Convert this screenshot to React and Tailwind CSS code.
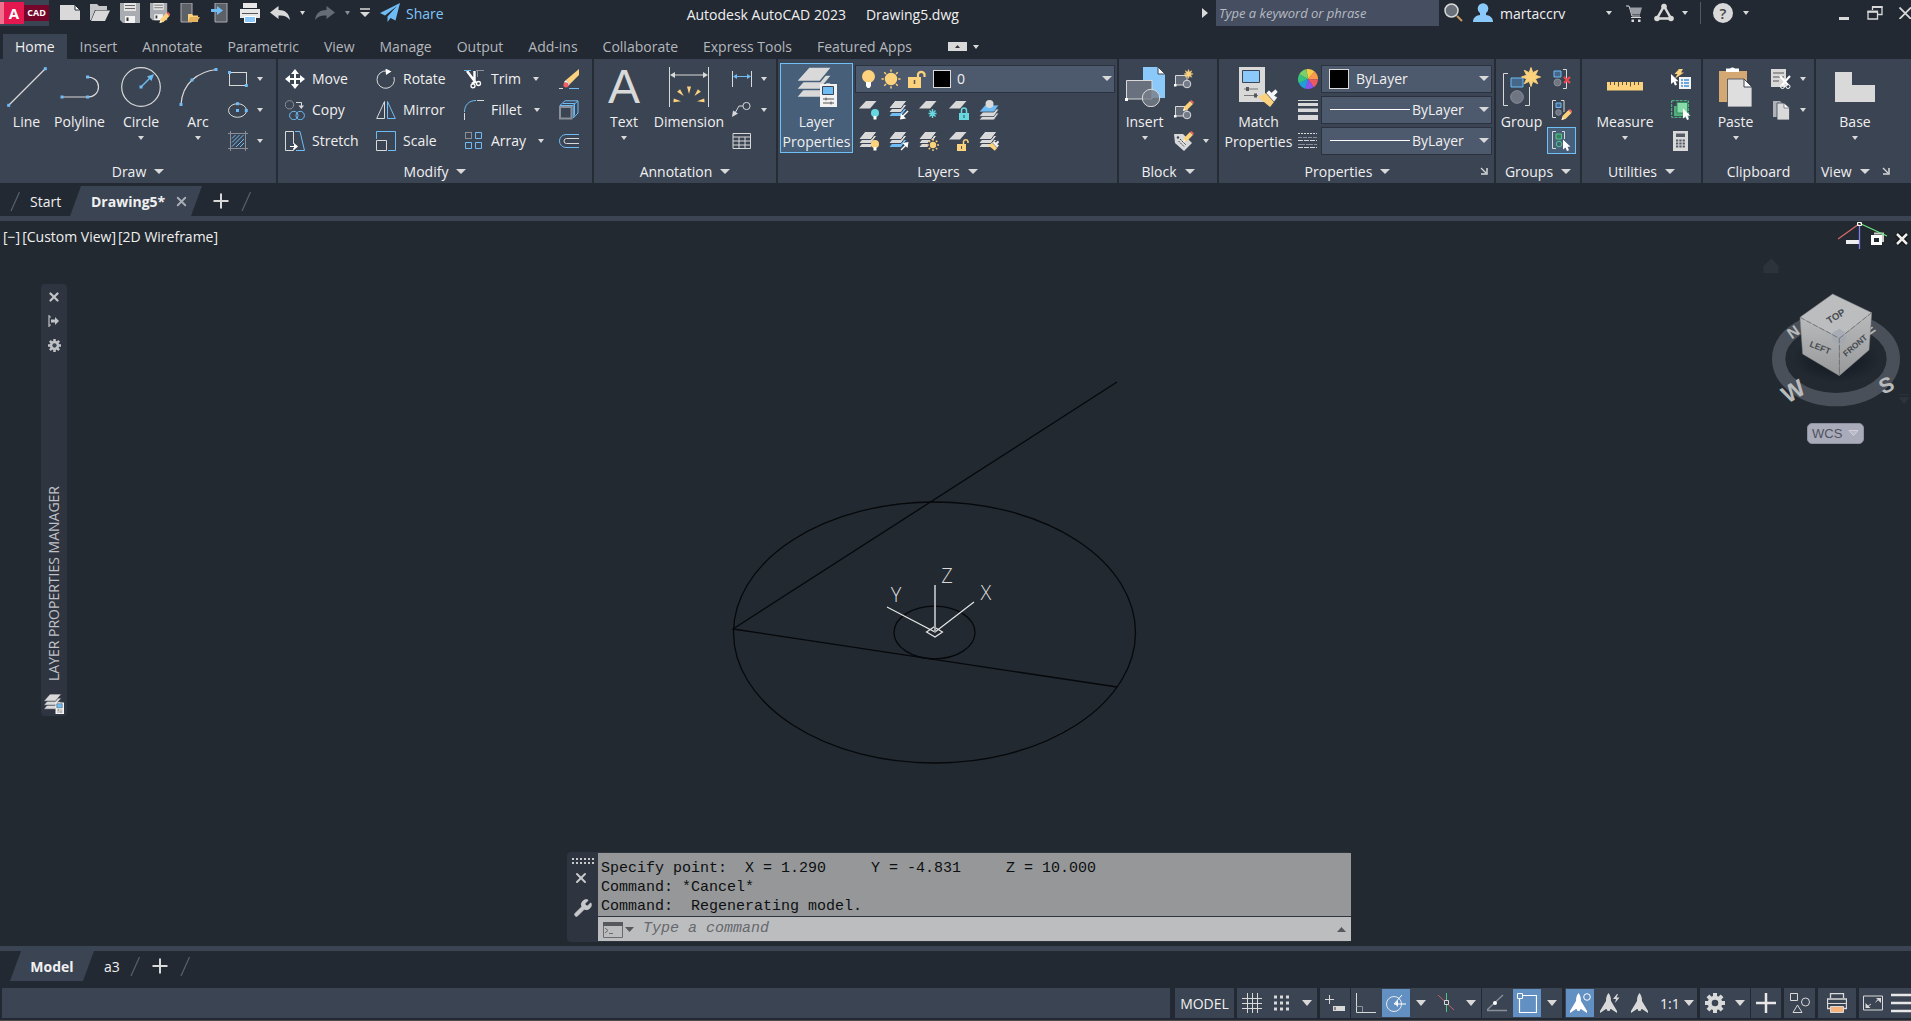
import React from 'react';
import { Wrench, X } from 'lucide-react';

const W = '#d9d9d9';
const B = '#6fbcf5';
const Y = '#fdd27c';
const R = '#f0605f';
const G = '#8a8f99';

const Svg = ({ w = 20, h = w, box, children, className = '' }) => (
  <svg width={w} height={h} viewBox={box || `0 0 ${w} ${h}`} fill="none" className={`shrink-0 ${className}`} aria-hidden="true">
    {children}
  </svg>
);

const Caret = ({ w = 6, h = 4, color = W, className = '' }) => (
  <Svg w={w} h={h} className={className}>
    <path d={`M0 0H${w}L${w / 2} ${h}Z`} fill={color} />
  </Svg>
);

const Dot = ({ x, y, s = 3 }) => <rect x={x - s / 2} y={y - s / 2} width={s} height={s} fill={B} />;

/* ---------- shared icon parts ---------- */

const Pencil = ({ x = 0, y = 0 }) => (
  <g transform={`translate(${x} ${y})`}>
    <path d="M1 7L7 1L10 4L4 10L0 11Z" fill={Y} />
    <path d="M7 1L8.5 0L11 2.5L10 4Z" fill={R} />
    <path d="M0 11L1 8.5L2.5 10Z" fill="#fff" />
  </g>
);

const Bulb = ({ x = 0, y = 0, color = Y }) => (
  <g transform={`translate(${x} ${y})`}>
    <circle cx="4" cy="4" r="4" fill={color} />
    <path d="M2.5 7H5.5V10.5H2.5Z" fill="#fff" />
  </g>
);

const Sun = ({ x, y, r, l, sw = 1.5 }) => (
  <g stroke={Y} strokeWidth={sw}>
    <circle cx={x} cy={y} r={r} fill={Y} stroke="none" />
    {[0, 45, 90, 135, 180, 225, 270, 315].map((a) => (
      <path key={a} d={`M${x} ${y - r - 1}V${y - l}`} transform={`rotate(${a} ${x} ${y})`} />
    ))}
  </g>
);

const Star = ({ x, y, s = 1 }) => (
  <path
    transform={`translate(${x} ${y}) scale(${s})`}
    d="M0 -10L1.9 -4.6L7.1 -7.1L4.6 -1.9L10 0L4.6 1.9L7.1 7.1L1.9 4.6L0 10L-1.9 4.6L-7.1 7.1L-4.6 1.9L-10 0L-4.6 -1.9L-7.1 -7.1L-1.9 -4.6Z"
    fill={Y}
    stroke={Y}
  />
);

const Cursor = ({ x, y }) => (
  <path transform={`translate(${x} ${y})`} d="M0 0V10L2.5 8L4 11.5L6 10.7L4.5 7.2H7.5Z" fill="#fff" />
);

const Sheets = ({ fills = [W, W, W], bg = '#3b4453' }) => (
  <g stroke={bg} strokeWidth="1">
    <path d="M6 8.5H18L12 16.5H-.5Z" fill={fills[2]} />
    <path d="M6 4.5H18L12 12.5H-.5Z" fill={fills[1]} />
    <path d="M6 .5H18L12 8.5H-.5Z" fill={fills[0]} />
  </g>
);

const OneSheet = () => <path d="M7 1H17.5L11 8.5H0Z" fill={W} />;

const Brush = ({ x = 0, y = 0, s = 1 }) => (
  <g transform={`translate(${x} ${y}) scale(${s})`}>
    <path d="M0 8L8 4L16 13L12 18Z" fill={Y} />
    <path d="M8 4L11 1L13.5 3.5L17.5 0L20 3L16.5 6.5L19.5 8.5L16 13Z" fill="#f4f4f4" stroke="#3b4453" strokeWidth=".6" />
  </g>
);

/* ---------- draw ---------- */

const LineIcon = () => (
  <Svg w={40}>
    <path d="M1.5 38.5L38.5 1.5" stroke={W} strokeWidth="1.2" />
    <Dot x={1.7} y={38.3} /><Dot x={38.3} y={1.7} />
  </Svg>
);

const PolylineIcon = () => (
  <Svg w={40}>
    <path d="M2.5 30H27.5C34 30 38.5 26 38.5 20S34 10 27.5 10" stroke={W} strokeWidth="1.2" />
    <Dot x={2} y={30} /><Dot x={27.5} y={30} /><Dot x={27.5} y={10} />
  </Svg>
);

const CircleIcon = () => (
  <Svg w={40}>
    <circle cx="20" cy="20" r="19.3" stroke={W} strokeWidth="1.2" />
    <path d="M20 20L30 10" stroke={B} strokeWidth="1.5" />
    <path d="M26 9.5L33 7L30.5 14Z" fill={B} />
    <Dot x={20} y={20} />
  </Svg>
);

const ArcIcon = () => (
  <Svg w={40}>
    <path d="M3 37.5Q4 22 14 13Q24 4 38.5 2.5" stroke={W} strokeWidth="1.2" />
    <Dot x={3} y={37.5} /><Dot x={14} y={13} /><Dot x={38} y={2.5} />
  </Svg>
);

const RectIcon = () => (
  <Svg>
    <rect x="1.5" y="3.5" width="17" height="13" stroke={W} />
    <Dot x={1.5} y={3.5} /><Dot x={18.3} y={16.5} />
  </Svg>
);

const EllipseIcon = () => (
  <Svg>
    <ellipse cx="9.5" cy="10.5" rx="9" ry="6.8" stroke={W} />
    <Dot x={9.5} y={10.5} /><Dot x={9.5} y={3.7} /><Dot x={18.3} y={10.5} />
  </Svg>
);

const HatchIcon = () => (
  <Svg>
    <path d="M4 15.5L15.5 4M4 11.5L11.5 4M8 16L16 8M4 7.5L7.5 4M12 16L16 12" stroke={B} />
    <path d="M0 2.5H20M0 17.5H20M2.5 0V20M17.5 0V20" stroke={G} />
  </Svg>
);

/* ---------- modify ---------- */

const MoveIcon = () => (
  <Svg>
    <path d="M10 2V18M2 10H18" stroke="#fff" strokeWidth="2" />
    <path d="M10 0L14 5H6ZM10 20L14 15H6ZM0 10L5 6V14ZM20 10L15 6V14Z" fill="#fff" />
  </Svg>
);

const CopyIcon = () => (
  <Svg>
    <circle cx="4.5" cy="4.8" r="4.2" stroke={G} />
    <path d="M11 2.5H16.5V6" stroke={W} /><path d="M13.5 5.5H19L16.3 9Z" fill={W} />
    <circle cx="8.8" cy="15.5" r="4.2" stroke={B} /><circle cx="15.2" cy="15.5" r="4.2" stroke={B} />
  </Svg>
);

const StretchIcon = () => (
  <Svg>
    <path d="M8.5 13V.5H.5V19.5H8.5V17" stroke={W} />
    <path d="M10 .5H15L19.5 19.5H11" stroke={B} />
    <path d="M5 15.5H11" stroke="#fff" /><path d="M9 12L13 15.5L9 19Z" fill="#fff" />
  </Svg>
);

const RotateIcon = () => (
  <Svg>
    <path d="M11 2A8.7 8.7 0 1 0 18 8" stroke={W} /><path d="M9.5 -.5L15.5 2.5L10 6Z" fill="#fff" />
  </Svg>
);

const MirrorIcon = () => (
  <Svg>
    <path d="M8.5 1.5V18.5H.7Z" stroke={W} /><path d="M11.5 1.5V18.5H19.3Z" stroke={B} />
  </Svg>
);

const ScaleIcon = () => (
  <Svg>
    <path d="M.5 8V.5H19.5V19.5H12" stroke={B} /><path d="M.5 19.5V9.5H10.5V19.5Z" stroke={W} />
  </Svg>
);

const TrimIcon = () => (
  <Svg>
    <path d="M0 1.5H8" stroke={B} strokeDasharray="3 1" />
    <path d="M12 1.5H20M13.5 1.5V8" stroke={G} />
    <path d="M3 2L12 14M10.5 2V13L8 15" stroke="#fff" strokeWidth="2.4" />
    <circle cx="9" cy="16.8" r="2" stroke="#fff" strokeWidth="1.3" /><circle cx="14.5" cy="14.5" r="2" stroke="#fff" strokeWidth="1.3" />
  </Svg>
);

const FilletIcon = () => (
  <Svg>
    <path d="M.5 12C.5 5 5 .5 12 .5" stroke={B} /><path d="M.5 13V20M13 .5H20" stroke={W} />
  </Svg>
);

const ArrayIcon = () => (
  <Svg>
    <rect x="1.5" y="1.5" width="6" height="6" stroke={G} />
    <path d="M11.5 1.5H17.5V7.5H11.5ZM1.5 11.5H7.5V17.5H1.5ZM11.5 11.5H17.5V17.5H11.5Z" stroke={B} />
  </Svg>
);

const EraseIcon = () => (
  <Svg>
    <path d="M20 0V6L11 15L7 11Z" fill={Y} /><path d="M7 11L11 15L9 17L5 13Z" fill="#fff" />
    <circle cx="7" cy="15.8" r="2.6" fill={R} />
    <path d="M0 19.5H4" stroke={W} /><path d="M10 19.5H20" stroke={B} />
  </Svg>
);

const ExplodeIcon = () => (
  <Svg>
    <rect x="1" y="7" width="11.5" height="11.5" stroke={G} strokeWidth="2" />
    <path d="M.8 5.5L6 .8H19L14 5.5ZM19 1V13L14.3 18V6M4 3.5H15.5V15.5" stroke={B} />
  </Svg>
);

const OffsetIcon = () => (
  <Svg>
    <path d="M20 3.5H7A6.5 6.5 0 0 0 7 16.5H20" stroke={B} />
    <path d="M20 7.5H7.5A2.5 2.5 0 0 0 7.5 12.5H20" stroke={W} />
  </Svg>
);

/* ---------- annotation ---------- */

const DimensionIcon = () => (
  <Svg w={40}>
    <path d="M.5 0V40M39.5 0V40M3 8H37" stroke={W} />
    <path d="M1 8L6 5V11ZM39 8L34 5V11Z" fill={W} />
    <g fill={Y}>
      {[-84, -42, 0, 42, 84].map((a) => (
        <path key={a} d="M20 27L18 19.5H22Z" transform={`rotate(${a} 20 35)`} />
      ))}
    </g>
  </Svg>
);

const LinearIcon = () => (
  <Svg>
    <path d="M.5 2V18M19.5 2V18" stroke={W} /><path d="M2 7.5H18" stroke={B} />
    <path d="M1 7.5L5 5V10ZM19 7.5L15 5V10Z" fill={B} />
  </Svg>
);

const LeaderIcon = () => (
  <Svg>
    <circle cx="14.5" cy="6" r="3.6" stroke={W} /><path d="M11 6H7L3 13" stroke={W} /><path d="M0 17L1 10.5L6 13.5Z" fill={W} />
  </Svg>
);

const TableIcon = () => (
  <Svg>
    <path d="M1 2.5H18.5V17.5H1ZM1 6H18.5M1 10H18.5M1 14H18.5M7 6V17M13 6V17" stroke={W} />
  </Svg>
);

/* ---------- layers ---------- */

const LayerPropsIcon = ({ w = 40, bg = '#475f79' }) => (
  <Svg w={w} box="0 0 40 40">
    <g fill={W} stroke={bg} strokeWidth="1.5">
      <path d="M12 15.5H35L23 30.5H-1Z" /><path d="M12 8H35L23 22.5H-1Z" /><path d="M12 0H35L23 14.5H-1Z" />
    </g>
    <path d="M23 17H40V40H23Z" fill="#f2f2f2" />
    <path d="M25.5 19.5H36.5V27.5H25.5Z" fill={B} stroke="#3b4453" />
    <path d="M26 32H37M26 36H37M29 30.5V33.5M34 34.5V37.5" stroke="#555" />
  </Svg>
);

const LayerOff = () => <Svg><OneSheet /><Bulb x={12} y={9} color="#67d8e0" /></Svg>;
const LayerIsolate = () => (
  <Svg><Sheets fills={[W, W, B]} /><path d="M19 11L14 16" stroke="#fff" strokeWidth="1.5" /><path d="M11 19.5L12 13.5L17 18.5Z" fill="#fff" /></Svg>
);
const LayerFreeze = () => (
  <Svg><OneSheet /><path d="M13.5 9V18M9.5 13.5H17.5M10.5 10.5L16.5 16.5M16.5 10.5L10.5 16.5" stroke="#67d8e0" strokeWidth="1.4" /></Svg>
);
const LayerLock = () => (
  <Svg><OneSheet /><path d="M12.5 13V10.5A2.5 2.5 0 0 1 17.5 10.5V13" stroke="#67d8e0" strokeWidth="1.5" /><path d="M10 13H20V20H10Z" fill="#67d8e0" /><path d="M15 15V18" stroke="#2f4a55" /></Svg>
);
const LayerCurrent = () => (
  <Svg>
    <g stroke="#3b4453" strokeWidth=".8"><path d="M6 13H20L15 20H0Z" fill={W} /><path d="M6 9H20L15 16.5H0Z" fill={W} /><path d="M6 5H20L15 12H0Z" fill={B} /></g>
    <circle cx="10.5" cy="4" r="4" fill={W} />
  </Svg>
);
const LayerOn = () => <Svg><Sheets /><Bulb x={12} y={9} /></Svg>;
const LayerUnisolate = () => (
  <Svg><Sheets fills={[W, W, B]} /><path d="M12 19L17 14" stroke="#fff" strokeWidth="1.5" /><path d="M19.5 11L18.5 17L13.5 12Z" fill="#fff" /></Svg>
);
const LayerThaw = () => <Svg><Sheets /><circle cx="14" cy="14" r="5.5" fill="#3b4453" /><Sun x={14} y={14} r={3.2} l={6} /></Svg>;
const LayerUnlock = () => (
  <Svg><OneSheet /><path d="M14.5 13V10.5A2.3 2.3 0 0 1 19 10.5V12" stroke={Y} strokeWidth="1.5" /><path d="M8 13H17V20H8Z" fill={Y} /><path d="M12.5 15V18" stroke="#555" /></Svg>
);
const LayerMatch = () => <Svg><Sheets /><Brush x={9} y={9.5} s={0.57} /></Svg>;

/* ---------- block ---------- */

const InsertIcon = () => (
  <Svg w={40}>
    <path d="M18 0H33L40 7V31H18Z" fill="#8ac9fa" /><path d="M33 0V7H40Z" fill="#fff" stroke="#3b4453" />
    <path d="M1.5 13.5H27V32H1.5Z" fill="#6a717e" stroke={W} />
    <circle cx="26" cy="31" r="8.7" fill="#777e8a" fillOpacity=".8" stroke={W} />
    <path d="M0 31H3V34H0Z" fill="#fff" />
  </Svg>
);

const BlockBase = () => (
  <>
    <path d="M1.5 6.5H13V16H1.5Z" fill="#626a77" stroke={W} /><circle cx="13" cy="15" r="3.8" fill="#747b88" stroke={W} />
    <path d="M0 15H2.5V17.5H0Z" fill="#fff" />
  </>
);
const BlockCreate = () => <Svg><BlockBase /><Star x={14.5} y={5} s={0.46} /></Svg>;
const BlockEdit = () => <Svg><BlockBase /><Pencil x={9} y={0} /></Svg>;
const BlockAttr = () => (
  <Svg>
    <path d="M0 3H9L18 12L10 20L1 12Z" fill={W} /><circle cx="4" cy="6.5" r="1.2" fill="#3b4453" />
    <path d="M6 8L12 14M4.5 10L10 15.5" stroke="#3b4453" strokeDasharray="2 1" /><Pencil x={9} y={0} />
  </Svg>
);

/* ---------- properties ---------- */

const MatchIcon = () => (
  <Svg w={40}>
    <path d="M0 0H26V35H0Z" fill={W} /><path d="M3.5 3.5H20.5V15.5H3.5Z" fill="#8ac9fa" stroke="#3b4453" />
    <path d="M5 22H19M5 28.5H19" stroke="#777" /><path d="M7 20H10V24H7ZM15 26.5H18V30.5H15Z" fill="#555" />
    <Brush x={19} y={22} />
  </Svg>
);

const ColorWheel = () => (
  <Svg>
    {['#f7c948', '#f79a4b', '#ea5a5f', '#8b52f0', '#1f9fd6', '#35c27f', '#7ad06a'].map((c, i) => {
      const a = (i * 360) / 7 - 100;
      const pt = (d) => `${10 + 10 * Math.cos((d * Math.PI) / 180)} ${10 + 10 * Math.sin((d * Math.PI) / 180)}`;
      return <path key={c} d={`M10 10L${pt(a)}A10 10 0 0 1 ${pt(a + 52)}Z`} fill={c} />;
    })}
  </Svg>
);

const WeightIcon = () => (
  <Svg><path d="M0 0H20V1H0ZM0 3H20V6H0ZM0 8.5H20V12H0ZM0 15H20V20H0Z" fill={W} /></Svg>
);

const TypeIcon = () => (
  <Svg>
    <path d="M0 2.5H19" stroke={W} strokeDasharray="2 1" /><path d="M0 6.5H19" stroke={G} strokeDasharray="4 1" />
    <path d="M0 9.5H19M0 16.5H19" stroke={W} strokeDasharray="5 1" /><path d="M0 13.5H19" stroke={G} strokeDasharray="7 1" />
  </Svg>
);

/* ---------- groups ---------- */

const GroupIcon = () => (
  <Svg w={40}>
    <path d="M6 6.5H1.5V38.5H6M23 38.5H27.5V20" stroke={W} />
    <path d="M9 11H21V20H9Z" fill="#44678a" stroke={B} /><circle cx="15" cy="30" r="6.3" fill="#6f7682" stroke={G} />
    <Star x={29} y={10} s={0.95} />
  </Svg>
);
const UngroupIcon = () => (
  <Svg>
    <path d="M2 2H9V8H2Z" fill="#44678a" stroke={B} /><circle cx="5.5" cy="13.5" r="3.5" fill="#6f7682" stroke={G} />
    <path d="M11 .5H14.5V19.5H11" stroke={W} /><path d="M12 8L18 14M18 8L12 14" stroke="#e8474b" strokeWidth="2.2" />
  </Svg>
);
const GroupEditIcon = () => (
  <Svg>
    <path d="M4 .5H.5V17.5H4M9 .5H12V12" stroke={W} /><path d="M4 3H9V7.5H4Z" fill="#44678a" stroke={B} />
    <circle cx="6.5" cy="12.5" r="2.8" fill="#6f7682" stroke={G} /><Pencil x={9.5} y={9} />
  </Svg>
);
const GroupSelectIcon = () => (
  <Svg>
    <path d="M4 .5H.5V17.5H4M10 .5H12.5V8" stroke={W} />
    <path d="M4 3H9.5V8H4Z" fill="#3f7d62" stroke="#52c98a" /><circle cx="7" cy="13" r="2.8" stroke="#52c98a" /><Cursor x={11} y={8.5} />
  </Svg>
);

/* ---------- utilities, clipboard, view ---------- */

const MeasureIcon = () => (
  <Svg w={40}>
    <path d="M2 15H38V23.5H2Z" fill={Y} />
    <path d="M5.5 15V18M9.5 15V18M13.5 15V19.5M17.5 15V18M21.5 15V18M25.5 15V19.5M29.5 15V18M33.5 15V18" stroke="#5a5340" />
  </Svg>
);
const QuickSelectIcon = () => (
  <Svg>
    <path d="M8 0H12L10 3.5H13L4 9.5L6.5 5H3.5Z" fill={Y} /><path d="M8 8H20V20H8Z" fill="#f2f2f2" />
    <path d="M10 11H12M10 14H12M10 17H12M13 11H18M13 14H18M13 17H18" stroke="#3d8fd6" strokeWidth="1.3" /><Cursor x={0} y={5} />
  </Svg>
);
const SelectAllIcon = () => (
  <Svg>
    <path d="M.7 .7H17.3V17.3H.7Z" stroke="#52c98a" strokeDasharray="3 1" />
    <path d="M3 6H14V16H3Z" fill="#4fae7a" /><path d="M6 2.5H16.5V13H6Z" fill="#86dba9" stroke="#3b8a60" /><Cursor x={12} y={8.5} />
  </Svg>
);
const CalcIcon = () => (
  <Svg>
    <path d="M2 0H17V20H2Z" fill={W} /><path d="M5 2.5H14V6H5Z" fill="#555b66" />
    <path d="M5 9.5H14M5 12.5H14M5 15.5H14" stroke="#555b66" strokeWidth="2" strokeDasharray="2.3 1" />
  </Svg>
);
const PasteIcon = () => (
  <Svg w={34} h={40}>
    <path d="M0 4H28V35H0Z" fill="#d4a873" /><path d="M7 5V1.500H11A3 2.500 0 0 1 16 1.500H20V5Z" fill="#fff" />
    <path d="M8.5 12H25L33 20V40H8.5Z" fill="#dedede" stroke="#3b4453" strokeWidth=".8" /><path d="M25 12V20H33Z" fill="#fff" stroke="#3b4453" />
  </Svg>
);
const CutIcon = () => (
  <Svg>
    <path d="M0 0H15V18H0Z" fill={W} /><path d="M2 4H13M2 8H13M2 12H8" stroke="#555" />
    <path d="M9 7L17 16M19 7L11 16" stroke="#fff" strokeWidth="2" />
    <circle cx="11.5" cy="17.5" r="2" stroke="#fff" /><circle cx="17" cy="17.5" r="2" stroke="#fff" />
  </Svg>
);
const CopyClipIcon = () => (
  <Svg>
    <path d="M2 1H9L12 4V17H2Z" fill="#aeb1b7" /><path d="M6 3H13L18.5 8V20H6Z" fill={W} stroke="#3b4453" strokeWidth=".8" />
    <path d="M13 3V8H18.5Z" fill="#fff" stroke="#3b4453" strokeWidth=".6" />
  </Svg>
);
const BaseIcon = () => <Svg w={40}><path d="M0 5H17V18H40V35H0Z" fill={W} /></Svg>;

const LauncherIcon = () => (
  <Svg w={8}><path d="M1 1L6 6" stroke={W} strokeWidth="1.3" /><path d="M7 1V7H1" stroke={W} strokeWidth="1.5" /></Svg>
);

/* ---------- ribbon building blocks ---------- */

const Panel = ({ title, width, caret = true, launcher, children }) => (
  <section className={`${width} flex flex-col border-r-2 border-[#252c36] bg-[#3b4453]`}>
    <div className="flex h-[100px] items-start pt-1">{children}</div>
    <div className="flex h-6 items-center">
      <button className="flex flex-1 items-center justify-center gap-2">
        {title}
        {caret && <Caret w={10} h={5} />}
      </button>
      {launcher && (
        <button aria-label={`${title} settings`} className="mr-[2px] px-1">
          <LauncherIcon />
        </button>
      )}
    </div>
  </section>
);

const BigButton = ({ icon, label, caret, width }) => (
  <button className={`${width} flex flex-col items-center pt-1`}>
    <span className="flex h-10 items-center">{icon}</span>
    <span className="mt-[5px] text-center leading-5">{label}</span>
    {caret && <Caret className="mt-1" />}
  </button>
);

const SmallButton = ({ icon, label, name, caret }) => (
  <button aria-label={name} className="flex h-[31px] items-center gap-[7px] whitespace-nowrap">
    {icon}
    {label}
    {caret && <Caret className={label ? 'ml-[5px]' : 'ml-[2px]'} />}
  </button>
);

const Combo = ({ label, value, children }) => (
  <label className="flex h-[28px] flex-1 items-center border border-[#2b323f] bg-[#4d596d] pr-[2px]">
    {children}
    <select aria-label={label} className="min-w-0 flex-1 appearance-none bg-transparent outline-none">
      <option>{value}</option>
    </select>
    <Caret w={10} h={5} />
  </label>
);

const MODIFY = [
  { icon: <MoveIcon />, label: 'Move' },
  { icon: <RotateIcon />, label: 'Rotate' },
  { icon: <TrimIcon />, label: 'Trim', caret: true },
  { icon: <EraseIcon />, name: 'Erase' },
  { icon: <CopyIcon />, label: 'Copy' },
  { icon: <MirrorIcon />, label: 'Mirror' },
  { icon: <FilletIcon />, label: 'Fillet', caret: true },
  { icon: <ExplodeIcon />, name: 'Explode' },
  { icon: <StretchIcon />, label: 'Stretch' },
  { icon: <ScaleIcon />, label: 'Scale' },
  { icon: <ArrayIcon />, label: 'Array', caret: true },
  { icon: <OffsetIcon />, name: 'Offset' },
];

const LAYER_TOOLS = [
  { name: 'Off', icon: <LayerOff /> },
  { name: 'Isolate', icon: <LayerIsolate /> },
  { name: 'Freeze', icon: <LayerFreeze /> },
  { name: 'Lock', icon: <LayerLock /> },
  { name: 'Make Current', icon: <LayerCurrent /> },
  { name: 'Turn All Layers On', icon: <LayerOn /> },
  { name: 'Unisolate', icon: <LayerUnisolate /> },
  { name: 'Thaw All Layers', icon: <LayerThaw /> },
  { name: 'Unlock', icon: <LayerUnlock /> },
  { name: 'Match Layer', icon: <LayerMatch /> },
];

const Ribbon = () => (
  <div className="flex h-[124px] shrink-0 overflow-hidden bg-[#3b4453] text-[14px] text-[#f0f0f0]">
    <Panel title="Draw" width="w-[278px]">
      <BigButton icon={<LineIcon />} label="Line" width="w-[53px]" />
      <BigButton icon={<PolylineIcon />} label="Polyline" width="w-[53px]" />
      <BigButton icon={<CircleIcon />} label="Circle" width="w-[70px]" caret />
      <BigButton icon={<ArcIcon />} label="Arc" width="w-[44px]" caret />
      <div className="ml-2">
        <SmallButton icon={<RectIcon />} name="Rectangle" caret />
        <SmallButton icon={<EllipseIcon />} name="Ellipse" caret />
        <SmallButton icon={<HatchIcon />} name="Hatch" caret />
      </div>
    </Panel>

    <Panel title="Modify" width="w-[316px]">
      <div className="grid grid-cols-[91px_88px_95px_20px] pl-[7px]">
        {MODIFY.map((m, i) => <SmallButton key={i} {...m} />)}
      </div>
    </Panel>

    <Panel title="Annotation" width="w-[184px]">
      <BigButton
        icon={<span className="font-['Liberation_Sans',sans-serif] text-[48px] leading-10 text-[#d9d9d9]">A</span>}
        label="Text"
        width="w-[60px]"
        caret
      />
      <BigButton icon={<DimensionIcon />} label="Dimension" width="w-[70px]" />
      <div className="ml-2">
        <SmallButton icon={<LinearIcon />} name="Linear" caret />
        <SmallButton icon={<LeaderIcon />} name="Leader" caret />
        <SmallButton icon={<TableIcon />} name="Table" />
      </div>
    </Panel>

    <Panel title="Layers" width="w-[341px]">
      <button className="ml-[2px] flex h-[90px] w-[73px] flex-col items-center border border-[#70c0f8] bg-[#475f79] pt-[3px]">
        <LayerPropsIcon />
        <span className="mt-[5px] leading-5">Layer<br />Properties</span>
      </button>
      <div className="ml-[2px] flex w-[260px] flex-col">
        <div className="flex h-[31px] items-center">
          <Combo label="Layer" value="0">
            <span className="mx-[6px] flex items-center gap-[6px]">
              <Svg w={13} h={20}><circle cx="6.5" cy="7.5" r="6.5" fill={Y} /><path d="M4 13H9V17L7.5 19H5.5L4 17Z" fill="#fff" /></Svg>
              <Svg><Sun x={10} y={10} r={6.2} l={9.5} /></Svg>
              <Svg><path d="M11 9V5A3.5 3.5 0 0 1 17.5 5V8" stroke={Y} strokeWidth="2.2" /><path d="M1 8H14V19H1Z" fill={Y} /><path d="M7.5 11V15" stroke="#555" strokeWidth="1.5" /></Svg>
              <span className="size-[18px] border border-[#d9d9d9] bg-black" />
            </span>
          </Combo>
        </div>
        <div className="grid grid-cols-5 gap-x-[10px] self-start pl-1">
          {LAYER_TOOLS.map((t) => <SmallButton key={t.name} {...t} />)}
        </div>
      </div>
    </Panel>

    <Panel title="Block" width="w-[100px]">
      <BigButton icon={<InsertIcon />} label="Insert" width="w-[51px]" caret />
      <div className="ml-1">
        <SmallButton icon={<BlockCreate />} name="Create" />
        <SmallButton icon={<BlockEdit />} name="Edit" />
        <SmallButton icon={<BlockAttr />} name="Edit Attributes" caret />
      </div>
    </Panel>

    <Panel title="Properties" width="w-[277px]" launcher>
      <BigButton icon={<MatchIcon />} label={<>Match<br />Properties</>} width="w-[79px]" />
      <div className="flex-1 pr-[2px]">
        <div className="flex h-[31px] items-center gap-[3px]">
          <ColorWheel />
          <Combo label="Object color" value="ByLayer"><span className="mx-[7px] size-5 border border-[#d9d9d9] bg-black" /></Combo>
        </div>
        <div className="flex h-[31px] items-center gap-[3px]">
          <WeightIcon />
          <Combo label="Lineweight" value="ByLayer"><span className="mr-[2px] ml-2 h-px w-20 bg-white" /></Combo>
        </div>
        <div className="flex h-[31px] items-center gap-[3px]">
          <TypeIcon />
          <Combo label="Linetype" value="ByLayer"><span className="mr-[2px] ml-2 h-px w-20 bg-white" /></Combo>
        </div>
      </div>
    </Panel>

    <Panel title="Groups" width="w-[86px]">
      <BigButton icon={<GroupIcon />} label="Group" width="w-[51px]" />
      <div className="flex flex-col items-center">
        <SmallButton icon={<UngroupIcon />} name="Ungroup" />
        <SmallButton icon={<GroupEditIcon />} name="Group Edit" />
        <button aria-label="Group Selection" className="mt-[2px] flex h-[27px] w-[29px] items-center justify-center border border-[#70c0f8] bg-[#475f79]">
          <GroupSelectIcon />
        </button>
      </div>
    </Panel>

    <Panel title="Utilities" width="w-[121px]">
      <BigButton icon={<MeasureIcon />} label="Measure" width="w-[86px]" caret />
      <div className="ml-[3px]">
        <SmallButton icon={<QuickSelectIcon />} name="Quick Select" />
        <SmallButton icon={<SelectAllIcon />} name="Select All" />
        <SmallButton icon={<CalcIcon />} name="Quick Calculator" />
      </div>
    </Panel>

    <Panel title="Clipboard" width="w-[113px]" caret={false}>
      <BigButton icon={<PasteIcon />} label="Paste" width="w-[65px]" caret />
      <div className="ml-[3px]">
        <SmallButton icon={<CutIcon />} name="Cut" caret />
        <SmallButton icon={<CopyClipIcon />} name="Copy Clip" caret />
      </div>
    </Panel>

    <section className="flex flex-1 flex-col bg-[#3b4453]">
      <div className="flex h-[100px] items-start pt-1">
        <BigButton icon={<BaseIcon />} label="Base" width="w-[78px]" caret />
      </div>
      <div className="flex h-6 items-center gap-3 pl-[5px]">
        <button className="flex items-center gap-2">View <Caret w={10} h={5} /></button>
        <button aria-label="View settings"><LauncherIcon /></button>
      </div>
    </section>
  </div>
);

/* ---------- title bar ---------- */

const SaveBody = () => (
  <>
    <path d="M0 0H20V20H3L0 17Z" fill="#a9acb1" /><path d="M4 0H16V8H4Z" fill="#e4e4e4" /><path d="M5 2.5H15M5 5.5H15" stroke="#666" />
    <path d="M5 13H15V20H5Z" fill="#f2f2f2" /><path d="M6.5 14.5H8.5V18H6.5Z" fill="#333" />
  </>
);

const QUICK = [
  { name: 'New', icon: <Svg><path d="M0 2H15L20 7V17H0Z" fill={W} /><path d="M15 2V7H20Z" fill="#fff" stroke="#222933" /></Svg> },
  { name: 'Open', icon: <Svg><path d="M0 1H7L9 3H17V7H5L1 17H0Z" fill="#c4c6c9" /><path d="M5.5 7.5H20L15 18H1Z" fill={W} /></Svg> },
  { name: 'Save', icon: <Svg><SaveBody /></Svg> },
  { name: 'Save As', icon: <Svg><g transform="scale(.86)"><SaveBody /></g><Pencil x={9.5} y={9} /></Svg> },
  { name: 'Open from Web', icon: <Svg><path d="M1 0H12V19H1Z" fill="#5c6168" stroke="#a9acb1" /><path d="M8 11H12L13 12.5H18V19H8Z" fill={Y} /><path d="M10 14H20L17 19H8Z" fill="#e3b35e" /></Svg> },
  { name: 'Save to Web', icon: <Svg><path d="M5 0H17V19H5Z" fill="#5c6168" stroke="#a9acb1" /><path d="M1 6H7V3L13 7.5L7 12V9H1Z" fill={B} /></Svg> },
  { name: 'Print', icon: <Svg><path d="M3 0H17V5H3ZM0 6H20V15H0Z" fill="#e8e8e8" /><path d="M2 10.5H18" stroke="#555" /><path d="M4.5 13.5H15.5V19.5H4.5Z" fill="#8ac9fa" stroke="#fff" /></Svg> },
  { name: 'Undo', icon: <Svg><path d="M0 9.5L8.5 3V7C15 7 19 10 20 17C17 13 13 12 8.5 12.5V16Z" fill={W} /></Svg> },
];

const UserBar = () => (
  <div className="ml-auto flex items-center">
    <Svg w={6} h={10}><path d="M0 0L6 5L0 10Z" fill={W} /></Svg>
    <input
      aria-label="Search"
      placeholder="Type a keyword or phrase"
      className="ml-2 h-[26px] w-[223px] bg-[#464f61] px-[3px] text-[13px] text-[#ddd] italic placeholder:text-[#b7bac1]"
    />
    <button aria-label="Find" className="ml-[5px]">
      <Svg><circle cx="7.5" cy="7.5" r="6.5" fill="#6a707a" stroke={W} strokeWidth="1.5" /><path d="M13 13L18 18" stroke="#c99a62" strokeWidth="2" /></Svg>
    </button>
    <button className="ml-[9px] flex items-center gap-[7px] text-[14px] text-[#f0f0f0]">
      <Svg><circle cx="10" cy="5.5" r="5.3" fill="#8ac9fa" /><path d="M0 19C0 14 4 12.5 7 12V9H13V12C16 12.5 20 14 20 19Z" fill="#8ac9fa" /></Svg>
      <span className="w-[99px] text-left">martaccrv</span>
      <Caret />
    </button>
    <button aria-label="Store" className="ml-[14px]">
      <Svg w={17} h={18}><path d="M0 2H3L6 12H14" stroke={W} /><path d="M3.5 3.5H16L14 10.5H5.5Z" fill="#9a9da3" /><path d="M5 13.5H15" stroke={W} /><path d="M5.5 15.5H8V18H5.5ZM12 15.5H14.5V18H12Z" fill={W} /></Svg>
    </button>
    <button aria-label="Autodesk App Store" className="ml-[11px] flex items-center gap-2">
      <Svg><path d="M10 3L3 15.5H17Z" stroke={W} strokeWidth="2.5" /><circle cx="10" cy="3.5" r="2.8" fill={W} /><circle cx="3" cy="15.5" r="2.8" fill={W} /><circle cx="17" cy="15.5" r="2.8" fill={W} /></Svg>
      <Caret />
    </button>
    <span className="ml-3 h-[22px] w-px bg-[#4d596d]" />
    <button aria-label="Help" className="ml-[12px] flex items-center gap-[10px]">
      <span className="flex size-5 items-center justify-center rounded-full bg-[#d9d9d9] text-[15px] font-semibold text-[#444]">?</span>
      <Caret />
    </button>
    <button aria-label="Minimize" className="ml-[90px] pt-[11px]"><Svg w={10} h={3}><path d="M0 0H10V3H0Z" fill={W} /></Svg></button>
    <button aria-label="Restore" className="ml-[18px]">
      <Svg w={16} h={14}><path d="M5.5 4V1H15V8.5H11M1 5.5H10.5V13H1Z" stroke={W} strokeWidth="1.3" /><path d="M5 1H15.5M.5 5.8H11" stroke={W} strokeWidth="2" /></Svg>
    </button>
    <button aria-label="Close" className="ml-4"><Svg w={12}><path d="M.5 .5L12 12M12 .5L.5 12" stroke={W} strokeWidth="1.8" /></Svg></button>
  </div>
);

const TitleBar = () => (
  <header className="flex h-[34px] shrink-0 items-start">
    <div className="flex h-[26px] flex-1 items-center">
      <button aria-label="Application menu" className="flex h-[26px] w-[49px] items-center bg-[#3b4453]">
        <span className="flex h-[22px] w-6 items-center justify-center border-l-4 border-[#f0708f] bg-[#e5174f] text-[15px] font-bold text-white">A</span>
        <span className="flex h-4 flex-1 items-center justify-center bg-[#75052a] text-[9px] font-bold text-white">CAD</span>
      </button>
      <div className="ml-[11px] flex items-center gap-[10px]">
        {QUICK.map((q) => <button key={q.name} aria-label={q.name}>{q.icon}</button>)}
        <button aria-label="Undo list"><Caret w={5} /></button>
        <button aria-label="Redo"><Svg><path d="M20 9.5L11.5 3V7C5 7 1 10 0 17C3 13 7 12 11.5 12.5V16Z" fill="#666b74" /></Svg></button>
        <button aria-label="Redo list"><Caret w={5} color={G} /></button>
        <button aria-label="Customize"><Svg w={10} h={10}><path d="M0 1H10" stroke={W} strokeWidth="1.5" /><path d="M0 4H10L5 9Z" fill={W} /></Svg></button>
        <button className="flex items-center gap-[6px] text-[14px] text-[#7fc6f8]">
          <Svg><path d="M20 0L0 10L5 12.5L17 3L7.5 13.5V19L10.5 15L15.5 17.5Z" fill={B} /></Svg>
          Share
        </button>
      </div>
      <h1 className="ml-[243px] flex gap-5 pt-[2px] text-[14px] whitespace-nowrap text-[#f0f0f0]">
        <span>Autodesk AutoCAD 2023</span>
        <span>Drawing5.dwg</span>
      </h1>
      <UserBar />
    </div>
  </header>
);

const TABS = ['Home', 'Insert', 'Annotate', 'Parametric', 'View', 'Manage', 'Output', 'Add-ins', 'Collaborate', 'Express Tools', 'Featured Apps'];

const RibbonTabs = () => (
  <nav className="flex h-[25px] shrink-0 gap-px pl-[3px] text-[14px] text-[#b4b7bc]">
    {TABS.map((t, i) => (
      <button key={t} className={`px-3 ${i === 0 ? 'bg-[#3b4453] text-[#f0f0f0]' : ''}`}>{t}</button>
    ))}
    <button aria-label="Minimize ribbon" className="ml-[23px] flex items-center gap-[6px]">
      <Svg w={19} h={9}><path d="M0 0H19V9H0Z" fill={W} /><path d="M7 6L9.5 3L12 6Z" fill="#333" /></Svg>
      <Caret />
    </button>
  </nav>
);

const Slash = () => <Svg w={11} h={21}><path d="M1 20L9.5 1" stroke="#59606d" strokeWidth="1.2" /></Svg>;

const Plus = () => (
  <Svg w={16}><path d="M8 .5V15.5M.5 8H15.5" stroke={W} strokeWidth="2" /></Svg>
);

const FileTabs = () => (
  <nav className="flex h-[33px] shrink-0 items-end text-[14px] text-[#f0f0f0]">
    <div className="flex h-[30px] items-center pl-[10px]">
      <Slash />
      <button className="ml-[9px] w-10 text-left">Start</button>
      <div className="flex h-[30px] w-[132px] items-center justify-between bg-[#3b4453] pr-[13px] pl-[21px] [clip-path:polygon(11px_0,100%_0,calc(100%_-_11px)_100%,0_100%)]">
        <button className="font-bold">Drawing5*</button>
        <button aria-label="Close tab"><X size={15} strokeWidth={3} color="#a9adb5" /></button>
      </div>
      <button aria-label="New drawing" className="ml-[11px]"><Plus /></button>
      <span className="ml-3"><Slash /></span>
    </div>
  </nav>
);

/* ---------- canvas ---------- */

const Model = () => (
  <svg width="412" height="394" viewBox="730 376 412 394" fill="none" className="absolute top-[155px] left-[730px]" aria-label="Model">
    <g stroke="#06080b" strokeWidth="1.3">
      <ellipse cx="934.5" cy="632.5" rx="201" ry="130.5" /><ellipse cx="934.5" cy="632.5" rx="40.5" ry="26.3" />
      <path d="M1117 382L733 629L1117 687" />
    </g>
    <g stroke="#e4e4e4" strokeWidth="1.2">
      <path d="M887 607L935 632L974 602M926.5 632L934 627L942.5 632L935 637Z" /><path d="M935 585V632" stroke="#a6a9ad" strokeWidth="2" />
    </g>
    <g fill="#d9d9d9" fontFamily="Open Sans, sans-serif" fontSize="20" fontWeight="300" textAnchor="middle">
      <text x="896" y="602">Y</text><text x="947" y="583">Z</text><text x="986" y="600">X</text>
    </g>
  </svg>
);

const ViewCube = () => (
  <svg width="151" height="195" viewBox="180 129 453 585" className="absolute top-8 right-0" aria-label="View cube">
    <defs>
      <linearGradient id="face" x1="0" y1="0" x2="0" y2="1"><stop offset="0" stopColor="#b9babb" /><stop offset="1" stopColor="#98999b" /></linearGradient>
      <radialGradient id="shade"><stop offset=".6" stopColor="#171d24" /><stop offset="1" stopColor="#171d24" stopOpacity="0" /></radialGradient>
    </defs>
    <path d="M190 168L214 145L236 168V190H190Z" fill="#2c333b" />
    <path d="M596 553H628M596 563H628L612 580Z" fill="#2c333b" stroke="#2c333b" strokeWidth="3" />
    <ellipse cx="408" cy="447" rx="172" ry="122" fill="none" stroke="#4a5059" strokeWidth="40" />
    <ellipse cx="410" cy="446" rx="130" ry="72" fill="url(#shade)" opacity=".7" />
    <g fill="#b8babc" fontFamily="Liberation Sans, sans-serif" fontWeight="700" textAnchor="middle">
      <text transform="translate(289 379) rotate(-35)" fontSize="46">N</text>
      <text transform="translate(518 369) rotate(-35)" fontSize="42">E</text>
      <text transform="translate(292 565) rotate(-30)" fontSize="72">W</text>
      <text transform="translate(568 545) rotate(-25)" fontSize="64">S</text>
    </g>
    <path d="M398 252L515 308L418 385L300 322Z" fill="#bcbdbf" />
    <path d="M300 322L418 385V497L308 432Z" fill="url(#face)" />
    <path d="M418 385L515 308L507 420L418 497Z" fill="url(#face)" />
    <path d="M418 356L437 368V392L418 405L397 392V368Z" fill="#9fa7b1" opacity=".7" />
    <path d="M300 322L418 385V497M418 385L515 308" fill="none" stroke="#6d7074" strokeWidth="2.5" strokeDasharray="16 6" />
    <path d="M300 322L398 252L515 308L507 420L418 497L308 432Z" fill="none" stroke="#84878b" strokeWidth="1.5" />
    <g fill="#454a51" fontFamily="Liberation Sans, sans-serif" fontWeight="700" textAnchor="middle">
      <text transform="translate(413 327) rotate(-32)" fontSize="29">TOP</text>
      <text transform="translate(357 421) rotate(22)" fontSize="26">LEFT</text>
      <text transform="translate(471 413) rotate(-40)" fontSize="25">FRONT</text>
    </g>
  </svg>
);

const ViewportControls = () => (
  <div className="absolute top-px right-[3px]">
    <svg width="70" height="30" viewBox="1838 222 70 30" fill="none" aria-hidden="true">
      <path d="M1846 240H1859V244H1846Z" fill="#eee" />
      <path d="M1874 233.5H1883V242" stroke="#ccc" strokeWidth="2" /><path d="M1872.5 236.5H1880.5V243.5H1872.5Z" stroke="#fff" strokeWidth="3" />
      <path d="M1897 234L1907 244M1907 234L1897 244" stroke="#111" strokeWidth="5" /><path d="M1897 234L1907 244M1907 234L1897 244" stroke="#eee" strokeWidth="2.5" />
      <path d="M1859 224L1838 239" stroke="#d9686c" strokeWidth="1.3" /><path d="M1860 223.5L1887 236" stroke="#6be27c" strokeWidth="1.3" />
      <path d="M1859.5 225V249" stroke="#7d7ff0" strokeWidth="1.3" /><path d="M1857.5 222.5H1861.5V225.5H1857.5Z" stroke="#fff" />
    </svg>
  </div>
);

const GearIcon = ({ w = 20, color = W }) => (
  <Svg w={w} box="0 0 20 20">
    {[0, 45, 90, 135].map((a) => <path key={a} d="M8 0H12V20H8Z" fill={color} transform={`rotate(${a} 10 10)`} />)}
    <circle cx="10" cy="10" r="7.3" fill={color} /><circle cx="10" cy="10" r="3.3" fill="#3b4453" />
  </Svg>
);

const LayerPalette = () => (
  <aside className="absolute top-[63px] left-[41px] flex h-[432px] w-[26px] flex-col items-center rounded bg-[#2e3440] pt-[6px] text-[#c0c2c5]">
    <button aria-label="Close palette"><X size={14} strokeWidth={4} /></button>
    <button aria-label="Auto-hide" className="mt-[11px]"><Svg w={12}><path d="M1 0V12M1 2H3M1 10H3" stroke="#c0c2c5" strokeWidth="1.2" /><path d="M3 4.5H7V2L11 6L7 10V7.5H3Z" fill="#c0c2c5" /></Svg></button>
    <button aria-label="Palette properties" className="mt-3"><GearIcon w={13} color="#c0c2c5" /></button>
    <h2 className="mt-auto rotate-180 text-[14px] leading-5 whitespace-nowrap [writing-mode:vertical-rl]">LAYER PROPERTIES MANAGER</h2>
    <div className="mt-[13px] mb-[2px]"><LayerPropsIcon w={20} bg="#2e3440" /></div>
  </aside>
);

const CommandLine = () => (
  <div className="absolute right-0 bottom-1 left-[7px] mx-auto flex h-[90px] w-[784px] rounded bg-[#2e3440] font-['Liberation_Mono',monospace] text-[15px]">
    <div className="flex w-[31px] flex-col items-center pt-[6px] text-[#c8c9cb]">
      <Svg w={22} h={7}><path d="M0 1H22M0 5H22" stroke="#c8c9cb" strokeWidth="2" strokeDasharray="2 2" /></Svg>
      <button aria-label="Close command line" className="mt-[5px] mr-1"><X size={16} strokeWidth={3} /></button>
      <button aria-label="Customize command line" className="mt-3"><Wrench size={20} fill="#c8c9cb" strokeWidth={1} /></button>
    </div>
    <div className="flex flex-1 flex-col pt-px pb-px">
      <pre className="flex-1 bg-[#969798] pt-[6px] pl-[3px] font-['Liberation_Mono',monospace] leading-[19px] text-[#0d0f12]">{`Specify point:  X = 1.290     Y = -4.831     Z = 10.000
Command: *Cancel*
Command:  Regenerating model.`}</pre>
      <div className="mt-px flex h-6 items-center bg-[#bcbdbf] pt-px pr-[5px] pl-[5px]">
        <Svg w={20} h={16}><path d="M.5 .5H19.5V15.5H.5Z" stroke="#6a6c70" /><path d="M0 0H20V4H0Z" fill="#55585d" /><path d="M2 6L5 8.5L2 11M6 11.5H10" stroke="#6a6c70" /></Svg>
        <Caret w={9} h={5} color="#55585d" className="ml-[2px]" />
        <input aria-label="Command" placeholder="Type a command" className="ml-[9px] min-w-0 flex-1 bg-transparent italic outline-none placeholder:text-[#66686c]" />
        <button aria-label="History"><Svg w={9} h={5}><path d="M0 5L4.5 0L9 5Z" fill="#55585d" /></Svg></button>
      </div>
    </div>
  </div>
);

const Canvas = () => (
  <main className="relative min-h-0 flex-1 overflow-hidden border-y-[5px] border-[#3b4453] bg-[#222930]">
    <div className="flex gap-[2px] pt-[6px] pl-[3px] text-[14px] leading-5 text-[#f0f0f0]">
      <button>[−]</button><button>[Custom View]</button><button>[2D Wireframe]</button>
    </div>
    <Model />
    <ViewCube />
    <ViewportControls />
    <button className="absolute top-[202px] right-[47px] flex h-[21px] w-[57px] items-center justify-between rounded-[5px] border border-[#8f91a0] bg-[#a9abba] px-1 font-['Liberation_Sans',sans-serif] text-[13px] text-[#50545e]">
      WCS <Svg w={11} h={7}><path d="M1 .5H10L5.5 5.5Z" fill="#b9bbc8" stroke="#cfd0da" /></Svg>
    </button>
    <LayerPalette />
    <CommandLine />
  </main>
);

/* ---------- bottom bars ---------- */

const LayoutTabs = () => (
  <nav className="flex h-[37px] shrink-0 items-start text-[14px] text-[#f0f0f0]">
    <div className="flex h-[30px] items-center pl-[10px]">
      <button className="h-[30px] w-[84px] bg-[#3b4453] font-bold [clip-path:polygon(11px_0,100%_0,calc(100%_-_11px)_100%,0_100%)]">Model</button>
      <button className="w-9">a3</button>
      <Slash />
      <button aria-label="New layout" className="ml-[11px]"><Plus /></button>
      <span className="ml-3"><Slash /></span>
    </div>
  </nav>
);

const Cell = ({ children, className = '' }) => <div className={`flex h-[30px] items-center bg-[#3b4453] ${className}`}>{children}</div>;

const StatusButton = ({ name, on, children, className = 'w-[30px]' }) => (
  <button aria-label={name} className={`${className} flex h-7 items-center justify-center ${on ? 'bg-[#6290c2]' : ''}`}>{children}</button>
);

const BigCaret = () => <Caret w={10} h={6} />;

const Person = ({ color = W, children }) => (
  <Svg w={21} h={20}>
    <path d="M8.5 0C10 2 11 4 11 8L17 18V20L11 16H10.5L9.5 18H7.5L6.5 16H6L0 20V18L6 8C6 4 7 2 8.5 0Z" fill={color} />{children}
  </Svg>
);

const StatusBar = () => (
  <footer className="flex h-[33px] shrink-0 items-start border-b border-[#4b4b4b] pl-[2px] text-[14px] text-[#f0f0f0]">
    <Cell className="min-w-0 flex-1" />
    <Cell className="ml-[5px] w-[59px] justify-center"><button>MODEL</button></Cell>
    <Cell className="ml-[3px] w-20">
      <StatusButton name="Grid"><Svg><path d="M5.5 0V20M10.5 0V20M15.5 0V20M0 5.5H20M0 10.5H20M0 15.5H20" stroke={W} /></Svg></StatusButton>
      <StatusButton name="Snap"><Svg w={16}><path d="M0 2H16M0 8H16M0 14H16" stroke={W} strokeWidth="3" strokeDasharray="3 3" /></Svg></StatusButton>
      <StatusButton name="Snap options" className="w-5"><BigCaret /></StatusButton>
    </Cell>
    <Cell className="ml-[3px]">
      <StatusButton name="Dynamic input"><Svg><path d="M4.5 2V11M0 6.5H9" stroke={W} /><path d="M8 13H20V18H8Z" fill={W} /><path d="M10 14V17" stroke="#333" /></Svg></StatusButton>
    </Cell>
    <Cell className="ml-px w-[130px]">
      <StatusButton name="Ortho"><Svg><path d="M.5 0V19.5H20" stroke={W} /><path d="M.5 13.5H6.5V19" stroke={G} /></Svg></StatusButton>
      <StatusButton name="Polar" on className="ml-px w-7"><Svg><circle cx="8" cy="11" r="7.5" stroke="#e8e8e8" /><path d="M8 11H20M8 11L16 2" stroke="#fff" /><path d="M12 7V14L9 11Z" fill="#fff" /></Svg></StatusButton>
      <StatusButton name="Polar options" className="w-[22px]"><BigCaret /></StatusButton>
      <StatusButton name="Isodraft" className="w-[28px]"><Svg w={16} h={20}><path d="M8.5 0V19" stroke="#4fc27c" /><path d="M0 2L16 17" stroke="#c35f66" /><path d="M6.5 7.5H10.5V11.5H6.5Z" stroke={W} fill="#3b4453" /></Svg></StatusButton>
      <StatusButton name="Isodraft options" className="w-[21px]"><BigCaret /></StatusButton>
    </Cell>
    <Cell className="ml-px w-20">
      <StatusButton name="Tracking"><Svg><path d="M0 17L16 2M0 17.5H20" stroke={G} strokeWidth="1.3" /><circle cx="8" cy="10" r="2" fill="#fff" /></Svg></StatusButton>
      <StatusButton name="Object snap" on className="ml-px w-7"><Svg><path d="M6 2.5H19.5V19.5H2.5V6" stroke="#fff" strokeWidth="1.2" /><path d="M.5 .5H5.5V5.5H.5Z" stroke="#fff" /></Svg></StatusButton>
      <StatusButton name="Object snap options" className="w-[21px]"><BigCaret /></StatusButton>
    </Cell>
    <Cell className="ml-[3px] w-[132px]">
      <StatusButton name="Annotation visibility" on className="ml-px w-7"><Person color="#fff"><circle cx="17" cy="4" r="3.3" stroke="#fff" /></Person></StatusButton>
      <StatusButton name="AutoScale" className="w-[32px]"><Person><path d="M17 1L13 6H16L15 10L19.5 4.5H16.5L18 1Z" fill={W} /></Person></StatusButton>
      <StatusButton name="Annotation scale"><Person /></StatusButton>
      <button className="ml-1 flex items-center gap-1">1:1 <BigCaret /></button>
    </Cell>
    <Cell className="ml-[3px] w-[50px]">
      <StatusButton name="Workspace"><GearIcon /></StatusButton>
      <StatusButton name="Workspace options" className="w-5"><BigCaret /></StatusButton>
    </Cell>
    <Cell className="ml-px"><StatusButton name="Annotation monitor"><Svg><path d="M10 0V20M0 10H20" stroke="#e8e8e8" strokeWidth="2.5" /></Svg></StatusButton></Cell>
    <Cell className="ml-[3px]"><StatusButton name="Isolate objects" className="w-[31px]"><Svg><path d="M.5 .5H7.5V7.5H.5ZM7.5 12L12 19.5H3Z" stroke={W} /><circle cx="15.5" cy="9" r="4" stroke={W} /></Svg></StatusButton></Cell>
    <Cell className="ml-[3px]"><StatusButton name="Plot" className="w-[38px]"><Svg><path d="M3.5 5V.5H16.5V5M.5 6H19.5V15.5H.5Z" stroke={W} strokeWidth="1.3" /><path d="M0 10.5H20" stroke={W} /><path d="M3.5 13.5H16.5V19.5H3.5Z" fill="#f8b27c" stroke={W} /></Svg></StatusButton></Cell>
    <Cell className="ml-[3px] w-[52px] overflow-hidden">
      <StatusButton name="Clean screen"><Svg><path d="M.5 3H19.5V17H.5Z" stroke={W} /><path d="M13 5H18V10ZM2.5 10V15H7.5Z" fill={W} /><path d="M12.5 9L16 6M8 11L4 14" stroke={W} /></Svg></StatusButton>
      <StatusButton name="Customization" className="ml-[5px] w-5 shrink-0"><Svg><path d="M0 2H20M0 10H20M0 18H20" stroke="#e8e8e8" strokeWidth="2.5" /></Svg></StatusButton>
    </Cell>
  </footer>
);

const App = () => (
  <div className="flex h-screen flex-col overflow-hidden bg-[#222933] font-['Open_Sans','Noto_Sans',sans-serif]">
    <TitleBar />
    <RibbonTabs />
    <Ribbon />
    <FileTabs />
    <Canvas />
    <LayoutTabs />
    <StatusBar />
  </div>
);

export default App;
